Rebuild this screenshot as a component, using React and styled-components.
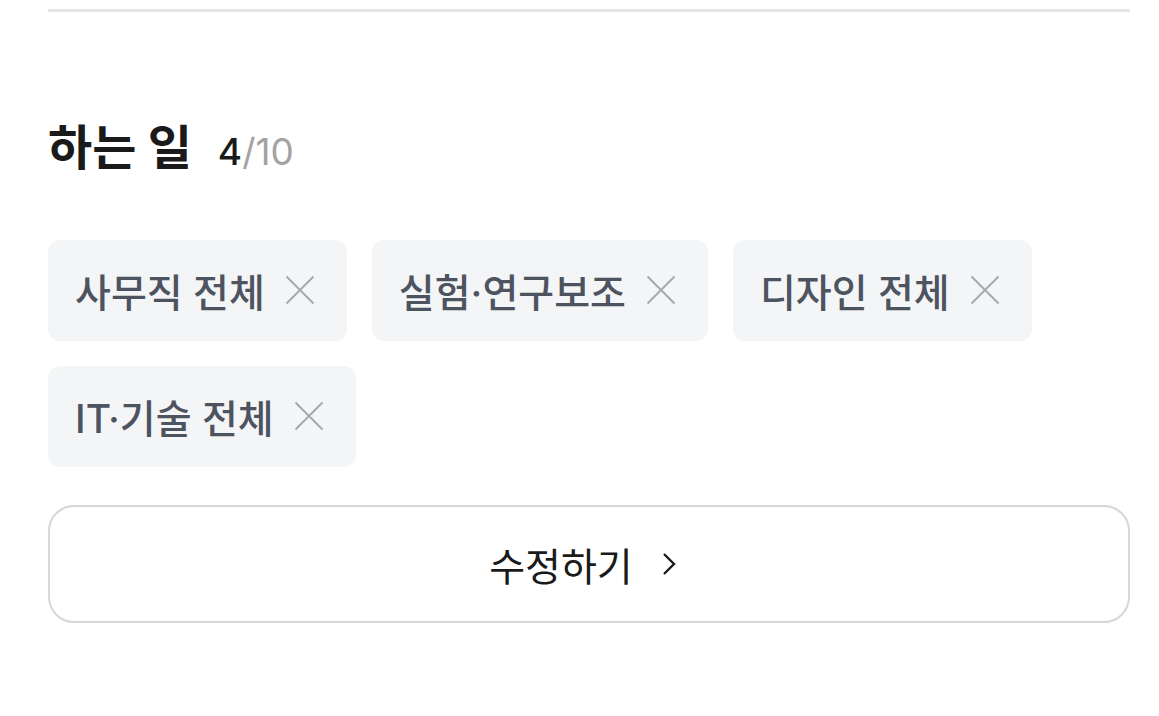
import React from "react";
import styled, { createGlobalStyle } from "styled-components";

const GlobalStyle = createGlobalStyle`
  body {
    margin: 0;
    background: #ffffff;
    font-family: Inter, "Noto Sans CJK KR", sans-serif;
  }
`;

const Page = styled.div`
  width: 1082px;
  padding: 9px 0 0 48px;
`;

const Divider = styled.hr`
  margin: 0;
  border: none;
  height: 3px;
  background: #e6e6e8;
`;

const Section = styled.section`
  padding-top: 107px;
`;

const Header = styled.div`
  display: flex;
  align-items: baseline;
  gap: 26px;
`;

const Title = styled.h2`
  margin: 0;
  font-size: 48px;
  font-weight: 700;
  color: #1a1a1a;
  line-height: 1.2;
`;

const Count = styled.span`
  font-size: 37px;
  font-weight: 400;
  color: #a3a3a3;

  b {
    font-weight: 500;
    color: #1a1a1a;
  }
`;

const ChipList = styled.ul`
  list-style: none;
  margin: 63px 0 0;
  padding: 0;
  display: flex;
  flex-wrap: wrap;
  gap: 25px 25px;
`;

const Chip = styled.li`
  height: 101px;
  display: flex;
  align-items: center;
  gap: 20px;
  padding: 0 32px 0 27px;
  background: #f4f5f7;
  border-radius: 12px;
  font-size: 39px;
  font-weight: 500;
  color: #4e5360;
`;

const RemoveIcon = styled.svg`
  width: 30px;
  height: 30px;
  flex: none;
`;

const EditButton = styled.button`
  margin-top: 38px;
  width: 100%;
  height: 118px;
  display: flex;
  align-items: center;
  justify-content: center;
  gap: 28px;
  padding: 0 12px 0 0;
  background: #ffffff;
  border: 2px solid #d6d6dc;
  border-radius: 26px;
  font-family: inherit;
  font-size: 39px;
  font-weight: 400;
  color: #1a1a1a;
  cursor: pointer;
`;

const Chevron = styled.svg`
  width: 16px;
  height: 26px;
`;

const jobs = ["사무직 전체", "실험·연구보조", "디자인 전체", "IT·기술 전체"];

function XIcon() {
  return (
    <RemoveIcon viewBox="0 0 30 30" fill="none" stroke="#a6a9b1" strokeWidth="2">
      <path d="M1.5 1.5 L28.5 28.5 M28.5 1.5 L1.5 28.5" />
    </RemoveIcon>
  );
}

export default function App() {
  return (
    <Page>
      <GlobalStyle />
      <Divider />
      <Section>
        <Header>
          <Title>하는 일</Title>
          <Count>
            <b>{jobs.length}</b>/10
          </Count>
        </Header>
        <ChipList>
          {jobs.map(job => (
            <Chip key={job}>
              {job}
              <XIcon />
            </Chip>
          ))}
        </ChipList>
        <EditButton>
          수정하기
          <Chevron viewBox="0 0 16 26" fill="none" stroke="#1a1a1a" strokeWidth="2.4">
            <path d="M3 3 L13 13 L3 23" />
          </Chevron>
        </EditButton>
      </Section>
    </Page>
  );
}
